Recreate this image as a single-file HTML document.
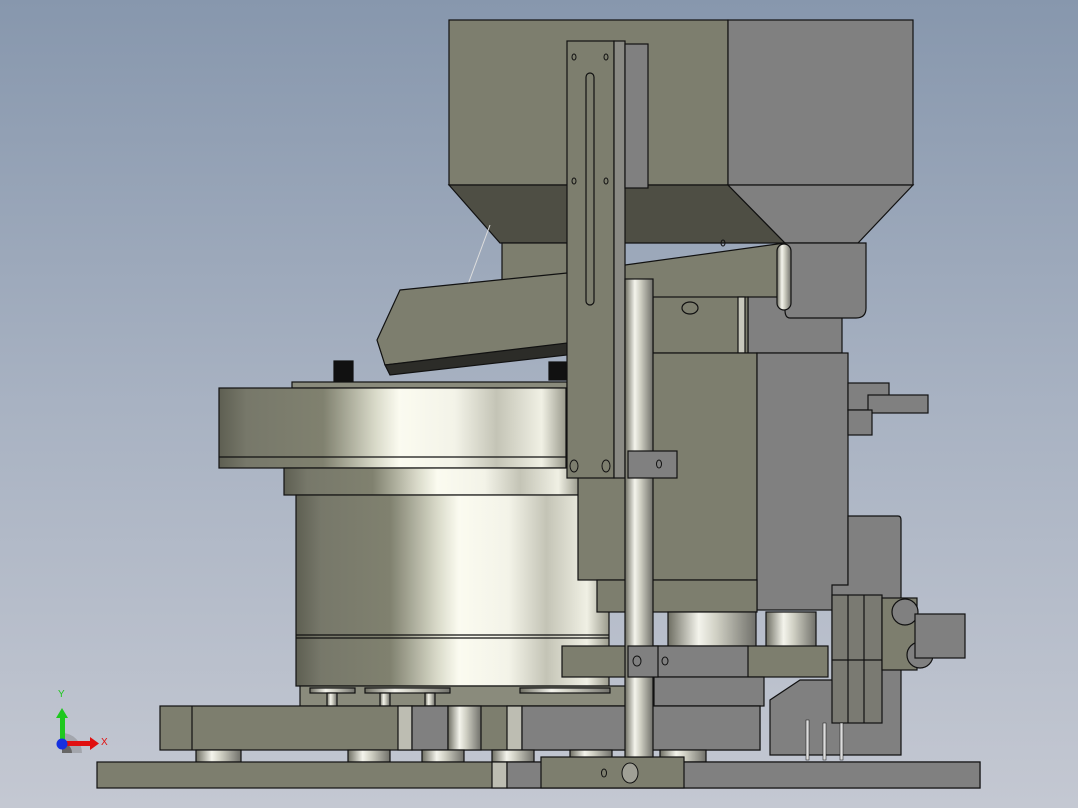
<!DOCTYPE html>
<html><head><meta charset="utf-8"><style>
html,body{margin:0;padding:0;width:1078px;height:808px;overflow:hidden}
body{background:linear-gradient(180deg,#8797ad 0%,#a8b2c2 50%,#c4c8d2 100%)}
svg{display:block}
text{font-family:"Liberation Sans",sans-serif}
</style></head><body>
<svg width="1078" height="808" viewBox="0 0 1078 808" xmlns="http://www.w3.org/2000/svg">
<defs>
<linearGradient id="met" x1="0" x2="1" y1="0" y2="0">
<stop offset="0" stop-color="#5e5f52"/><stop offset="0.08" stop-color="#77786a"/><stop offset="0.3" stop-color="#80816f"/>
<stop offset="0.45" stop-color="#d8d9c8"/><stop offset="0.52" stop-color="#fbfbf0"/><stop offset="0.68" stop-color="#f3f3e8"/>
<stop offset="0.8" stop-color="#c4c4b6"/><stop offset="0.93" stop-color="#f0f0e4"/><stop offset="1" stop-color="#9a9a8c"/>
</linearGradient>
<linearGradient id="rod" x1="0" x2="1">
<stop offset="0" stop-color="#6e6e62"/><stop offset="0.35" stop-color="#f4f4ec"/><stop offset="0.55" stop-color="#d0d0c4"/><stop offset="1" stop-color="#70706a"/>
</linearGradient>
</defs>
<g stroke="#111" stroke-width="1.2">
<!-- hopper -->
<rect x="449" y="20" width="279" height="165" fill="#7d7e6e"/>
<rect x="728" y="20" width="185" height="165" fill="#808080"/>
<polygon points="449,185 728,185 785,243 500,243" fill="#4e4e44"/>
<polygon points="728,185 913,185 858,243 785,243" fill="#808080"/>
<rect x="502" y="243" width="65" height="50" fill="#7d7e6e"/>
<line x1="490" y1="225" x2="467" y2="287" stroke="#ddd" stroke-width="1"/>
<!-- track -->
<polygon points="400,290 567,273 785,243 785,300 567,345 385,365 377,340" fill="#7d7e6e"/>
<polygon points="385,365 567,343 567,355 390,375" fill="#2c2c28"/>
<rect x="748" y="297" width="94" height="56" fill="#808080"/>
<rect x="653" y="297" width="95" height="56" fill="#7d7e6e"/>
<rect x="738" y="297" width="7" height="56" fill="#c8c8bc"/>
<path d="M785,243 H866 V308 Q866,318 856,318 H790 Q785,318 785,310 Z" fill="#808080"/>
<rect x="777" y="244" width="14" height="66" rx="7" fill="url(#rod)"/>
<ellipse cx="690" cy="308" rx="8" ry="6" fill="#7d7e6e"/>
<!-- black knobs -->
<rect x="334" y="361" width="19" height="20" fill="#111"/>
<rect x="549" y="362" width="17" height="18" fill="#111"/>
<rect x="292" y="382" width="275" height="6" fill="#8a8b7c"/>
<!-- bowl -->
<rect x="219" y="388" width="347" height="80" fill="url(#met)"/>
<line x1="219" y1="457" x2="566" y2="457"/>
<rect x="284" y="468" width="295" height="27" fill="url(#met)"/>
<rect x="296" y="495" width="313" height="191" fill="url(#met)"/>
<line x1="296" y1="635" x2="609" y2="635"/><line x1="296" y1="638" x2="609" y2="638"/>
<!-- center blocks -->
<rect x="578" y="353" width="179" height="227" fill="#7d7e6e"/>
<rect x="757" y="353" width="91" height="257" fill="#808080"/>
<rect x="597" y="580" width="160" height="32" fill="#7d7e6e"/>
<rect x="848" y="383" width="41" height="27" fill="#808080"/>
<rect x="868" y="395" width="60" height="18" fill="#808080"/>
<rect x="848" y="410" width="24" height="25" fill="#808080"/>
<!-- right mechanism -->
<path d="M848,516 H898 Q901,516 901,520 V755 H770 V700 L800,680 H832 V585 H848 Z" fill="#808080"/>
<rect x="832" y="595" width="50" height="128" fill="#7a7a72"/>
<line x1="848" y1="595" x2="848" y2="723"/><line x1="864" y1="595" x2="864" y2="723"/>
<line x1="832" y1="660" x2="882" y2="660"/>
<rect x="882" y="598" width="35" height="72" fill="#7d7e6e"/>
<circle cx="905" cy="612" r="13" fill="#808080"/>
<circle cx="920" cy="655" r="13" fill="#808080"/>
<rect x="915" y="614" width="50" height="44" fill="#808080"/>
<rect x="806" y="720" width="3" height="40" fill="#ddd" stroke-width="0.5"/>
<rect x="823" y="723" width="3" height="37" fill="#ddd" stroke-width="0.5"/>
<rect x="840" y="723" width="3" height="37" fill="#ddd" stroke-width="0.5"/>
<!-- cylinders under block -->
<rect x="668" y="612" width="88" height="35" fill="url(#rod)"/>
<rect x="766" y="612" width="50" height="35" fill="url(#rod)"/>
<!-- clamp bar -->
<rect x="562" y="646" width="266" height="31" fill="#7d7e6e"/>
<rect x="628" y="646" width="120" height="31" fill="#808080"/>
<rect x="300" y="686" width="370" height="20" fill="#8a8b7c"/>
<rect x="654" y="677" width="110" height="29" fill="#808080"/>
<!-- feet -->
<rect x="310" y="688" width="45" height="5" fill="url(#rod)"/>
<rect x="365" y="688" width="85" height="5" fill="url(#rod)"/>
<rect x="520" y="688" width="90" height="5" fill="url(#rod)"/>
<rect x="327" y="693" width="10" height="13" fill="url(#rod)"/>
<rect x="380" y="693" width="10" height="13" fill="url(#rod)"/>
<rect x="425" y="693" width="10" height="13" fill="url(#rod)"/>
<!-- plates -->
<rect x="160" y="706" width="600" height="44" fill="#7d7e6e"/>
<line x1="192" y1="706" x2="192" y2="750"/>
<rect x="398" y="706" width="14" height="44" fill="#bdbdb2"/>
<rect x="412" y="706" width="36" height="44" fill="#808080"/>
<rect x="448" y="706" width="33" height="44" fill="url(#rod)"/>
<rect x="507" y="706" width="15" height="44" fill="#bdbdb2"/>
<rect x="522" y="706" width="238" height="44" fill="#808080"/>
<rect x="196" y="750" width="45" height="12" fill="url(#rod)"/>
<rect x="348" y="750" width="42" height="12" fill="url(#rod)"/>
<rect x="422" y="750" width="42" height="12" fill="url(#rod)"/>
<rect x="492" y="750" width="42" height="12" fill="url(#rod)"/>
<rect x="570" y="750" width="42" height="12" fill="url(#rod)"/>
<rect x="660" y="750" width="46" height="12" fill="url(#rod)"/>
<rect x="97" y="762" width="883" height="26" fill="#7d7e6e"/>
<rect x="492" y="762" width="15" height="26" fill="#bdbdb2"/>
<rect x="507" y="762" width="473" height="26" fill="#808080"/>
<rect x="541" y="757" width="143" height="31" fill="#7d7e6e"/>
<!-- vertical plate -->
<rect x="567" y="41" width="47" height="437" fill="#7d7e6e"/>
<rect x="614" y="41" width="11" height="437" fill="#8a8a84"/>
<rect x="625" y="44" width="23" height="144" fill="#808080"/>
<rect x="586" y="73" width="8" height="232" rx="4" fill="#7d7e6e"/>
<!-- rod -->
<rect x="625" y="279" width="28" height="478" fill="url(#rod)"/>
<rect x="628" y="451" width="49" height="27" fill="#808080"/>
<rect x="628" y="646" width="30" height="31" fill="#808080"/>
</g>
<g fill="none" stroke="#111" stroke-width="1">
<ellipse cx="574" cy="57" rx="2" ry="3"/><ellipse cx="606" cy="57" rx="2" ry="3"/>
<ellipse cx="574" cy="181" rx="2" ry="3"/><ellipse cx="606" cy="181" rx="2" ry="3"/>
<ellipse cx="574" cy="466" rx="4" ry="6"/><ellipse cx="606" cy="466" rx="4" ry="6"/>
<ellipse cx="659" cy="464" rx="2.5" ry="4"/>
<ellipse cx="637" cy="661" rx="4" ry="5"/><ellipse cx="665" cy="661" rx="3" ry="4"/>
<ellipse cx="723" cy="243" rx="2" ry="3"/>
<ellipse cx="630" cy="773" rx="8" ry="10" fill="#a0a096"/>
<ellipse cx="604" cy="773" rx="2.5" ry="4"/>
</g>
<!-- axis triad -->
<path d="M62,733 A20,20 0 0 1 82,753 H62 Z" fill="#a3a6ad"/>
<path d="M62,743 A10,10 0 0 1 72,753 H62 Z" fill="#666"/>
<rect x="60" y="718" width="5" height="28" fill="#1ec81e"/>
<polygon points="56,718 62,708 68,718" fill="#1ec81e"/>
<rect x="62" y="741" width="28" height="5" fill="#e01010"/>
<polygon points="90,737 99,743.5 90,750" fill="#e01010"/>
<circle cx="62" cy="744" r="5.5" fill="#1530e0"/>
<text x="58" y="697" font-size="10" fill="#1ec81e">Y</text>
<text x="101" y="745" font-size="10" fill="#e01010">X</text>
</svg>
</body></html>
